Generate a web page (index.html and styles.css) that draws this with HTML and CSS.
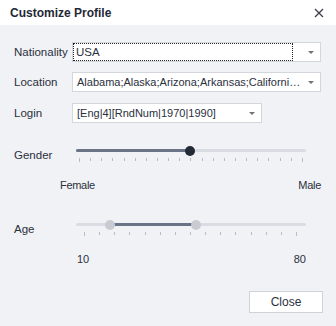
FILE: index.html
```html
<!DOCTYPE html>
<html lang="en">
<head>
    <meta charset="UTF-8">
    <title>Customize Profile</title>
    <link rel="stylesheet" href="styles.css">
</head>
<body>
    <div class="dialog">
        <div class="titlebar">
            <span class="title">Customize Profile</span>
            <svg class="close-icon" width="10" height="10" viewBox="0 0 10 10">
                <path d="M1 1 L9 9 M9 1 L1 9" stroke="#3a3f4a" stroke-width="1.3" fill="none"/>
            </svg>
        </div>

        <div class="body">
            <div class="field">
                <span class="label">Nationality</span>
                <div class="combo wide">
                    <span class="value focused">USA</span>
                    <span class="arrow"></span>
                </div>
            </div>
            <div class="field">
                <span class="label">Location</span>
                <div class="combo wide">
                    <span class="value">Alabama;Alaska;Arizona;Arkansas;Californi…</span>
                    <span class="arrow"></span>
                </div>
            </div>
            <div class="field login">
                <span class="label">Login</span>
                <div class="combo short">
                    <span class="value">[Eng|4][RndNum|1970|1990]</span>
                    <span class="arrow"></span>
                </div>
            </div>

            <div class="slider-row gender">
                <span class="label">Gender</span>
                <div class="slider">
                    <div class="track"></div>
                    <div class="fill" style="left: 0; width: 114px;"></div>
                    <div class="thumb dark" style="left: 114px;"></div>
                    <div class="ticks ticks-gender">
                        <i></i><i></i><i></i><i></i><i></i><i></i><i></i>
                        <i></i><i></i><i></i><i></i><i></i><i></i><i></i>
                        <i></i><i></i><i></i><i></i><i></i><i></i><i></i>
                    </div>
                </div>
            </div>
            <div class="range-labels gender-labels">
                <span>Female</span>
                <span>Male</span>
            </div>

            <div class="slider-row age">
                <span class="label">Age</span>
                <div class="slider">
                    <div class="track"></div>
                    <div class="fill" style="left: 34px; width: 86px;"></div>
                    <div class="thumb light" style="left: 34px;"></div>
                    <div class="thumb light" style="left: 120px;"></div>
                    <div class="ticks ticks-age">
                        <i></i><i></i><i></i><i></i><i></i>
                        <i></i><i></i><i></i><i></i><i></i>
                        <i></i><i></i><i></i><i></i><i></i>
                    </div>
                </div>
            </div>
            <div class="range-labels age-labels">
                <span>10</span>
                <span>80</span>
            </div>

            <div class="footer">
                <button class="btn">Close</button>
            </div>
        </div>
    </div>
</body>
</html>
```

FILE: styles.css
```css
body, html {
    margin: 0;
    padding: 0;
    font-family: 'Liberation Sans', Arial, sans-serif;
    color: #2a303c;
    background: #f1f2f6;
}

.dialog {
    width: 336px;
    height: 326px;
    background: #f1f2f6;
}

.titlebar {
    height: 25px;
    background: white;
    display: flex;
    align-items: center;
    justify-content: space-between;
    padding: 0 12px 0 10px;
}

.title {
    font-size: 12px;
    font-weight: bold;
    color: #1f2836;
}

.close-icon {
    display: block;
}

.body {
    padding: 17px 15px 0 14px;
}

.label {
    font-size: 11.5px;
    width: 58px;
    flex-shrink: 0;
    line-height: 16px;
    white-space: nowrap;
}

.field {
    display: flex;
    align-items: center;
    margin-bottom: 10px;
}

.field.login {
    margin-top: 11px;
}

.combo {
    position: relative;
    height: 20px;
    box-sizing: border-box;
    background: white;
    border: 1px solid #d3d6dc;
    display: flex;
    align-items: center;
    flex-shrink: 0;
}

.combo.wide {
    width: 249px;
}

.combo.short {
    width: 190px;
}

.value {
    font-size: 11px;
    line-height: 16px;
    padding: 0 2px 0 3px;
    margin-left: 1px;
    white-space: nowrap;
    overflow: hidden;
    flex: 1;
}

.value.focused {
    font-size: 11.5px;
    outline: 1px dotted #222;
    margin-right: 16px;
    padding-left: 2px;
}

.arrow {
    width: 0;
    height: 0;
    border-left: 3px solid transparent;
    border-right: 3px solid transparent;
    border-top: 3px solid #6e727b;
    margin: 0 6px 0 4px;
    flex-shrink: 0;
}

.combo.wide .value.focused + .arrow {
    margin-left: 0;
}

.slider-row {
    display: flex;
    align-items: flex-start;
    margin-top: 23px;
}

.slider-row.age {
    margin-top: 28px;
}

.slider-row .label {
    width: 62px;
    padding-top: 1px;
}

.slider {
    position: relative;
    width: 230px;
    height: 18px;
}

.track {
    position: absolute;
    top: 3px;
    left: 0;
    right: 0;
    height: 3px;
    border-radius: 2px;
    background: #d9dce2;
}

.fill {
    position: absolute;
    top: 3px;
    height: 3px;
    border-radius: 2px;
    background: #6b7386;
}

.thumb {
    position: absolute;
    top: 0;
    width: 10px;
    height: 10px;
    margin-left: -5px;
    margin-top: -0.5px;
    border-radius: 50%;
}

.thumb.dark {
    background: #232b38;
}

.thumb.light {
    background: #c8cbd1;
}

.ticks {
    position: absolute;
    top: 12px;
    display: flex;
    justify-content: space-between;
}

.ticks i {
    display: block;
    width: 1px;
    height: 3px;
    background: #b9bcc3;
}

.ticks-gender {
    left: 3px;
    right: 3px;
}

.ticks-age {
    left: 8px;
    right: 9px;
}

.ticks i:first-child,
.ticks i:last-child {
    height: 4px;
}

.range-labels {
    display: flex;
    justify-content: space-between;
    font-size: 11px;
    line-height: 14px;
    margin-top: 14px;
}

.gender-labels {
    margin-left: 46px;
    margin-right: 0;
    letter-spacing: -0.3px;
}

.age-labels {
    margin-left: 63px;
    margin-right: 15px;
}

.footer {
    display: flex;
    justify-content: flex-end;
    margin-top: 25px;
    margin-right: -2px;
}

.btn {
    width: 74px;
    height: 22px;
    background: white;
    border: 1px solid #cfd2d8;
    font-family: 'Liberation Sans', Arial, sans-serif;
    font-size: 12px;
    color: #2a303c;
    padding: 0;
}
```
